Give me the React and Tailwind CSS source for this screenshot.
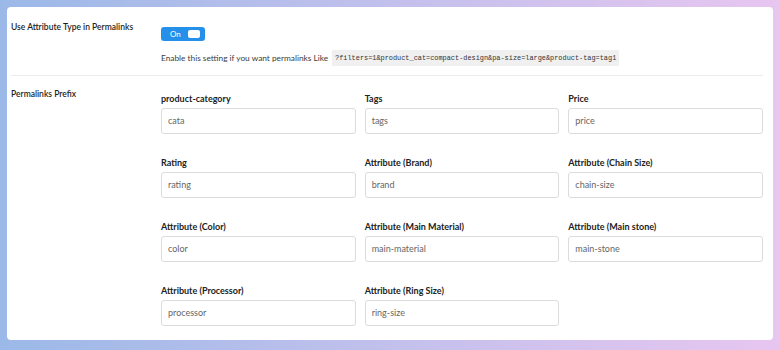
const fields = [
  { label: 'product-category', value: 'cata' },
  { label: 'Tags', value: 'tags' },
  { label: 'Price', value: 'price' },
  { label: 'Rating', value: 'rating' },
  { label: 'Attribute (Brand)', value: 'brand' },
  { label: 'Attribute (Chain Size)', value: 'chain-size' },
  { label: 'Attribute (Color)', value: 'color' },
  { label: 'Attribute (Main Material)', value: 'main-material' },
  { label: 'Attribute (Main stone)', value: 'main-stone' },
  { label: 'Attribute (Processor)', value: 'processor' },
  { label: 'Attribute (Ring Size)', value: 'ring-size' },
]

export default function App() {
  return (
    <div className="w-[780px] h-[350px] p-[7px] pb-[10px] bg-gradient-to-r from-[#9bb9e8] to-[#e7c6f0] font-['Lato',sans-serif] text-[#1e1e1e]">
      <div className="h-full bg-white rounded-[4px] pl-[4px] pr-[10px]">
        {/* toggle row */}
        <div className="flex pt-[13px] border-b border-[#ececec] pb-[9px]">
          <div className="w-[150px] text-[8.5px] leading-[14px] font-semibold whitespace-nowrap">Use Attribute Type in Permalinks</div>
          <div className="flex-1">
            <div className="mt-[7px] w-[44px] h-[14px] rounded-[3px] bg-[#2490ea] flex items-center justify-between pl-[9px] pr-[5px]">
              <span className="text-white text-[8px] leading-none">On</span>
              <span className="w-[12px] h-[8px] rounded-[2px] bg-white"></span>
            </div>
            <div className="mt-[9px] text-[8.3px] leading-[14px] text-[#3c3c3c] flex items-center">
              <span>Enable this setting if you want permalinks Like</span>
              <code className="ml-[4px] bg-[#f0f0f0] px-[3px] py-[1px] font-['Liberation_Mono',monospace] text-[6.9px] text-[#333]">?filters=1&amp;product_cat=compact-design&amp;pa-size=large&amp;product-tag=tag1</code>
            </div>
          </div>
        </div>

        {/* prefixes */}
        <div className="flex pt-[11px]">
          <div className="w-[150px] text-[8.5px] leading-[14px] font-semibold">Permalinks Prefix</div>
          <div className="flex-1 pt-[5px] grid grid-cols-3 gap-x-[9px] gap-y-[22px]">
            {fields.map((f) => (
              <div key={f.label}>
                <div className="text-[9px] leading-[14px] font-bold text-[#222]">{f.label}</div>
                <div className="mt-[2px] h-[26px] border border-[#dcdcdc] rounded-[3px] flex items-center px-[6px] text-[9px] text-[#666]">{f.value}</div>
              </div>
            ))}
          </div>
        </div>
      </div>
    </div>
  )
}
